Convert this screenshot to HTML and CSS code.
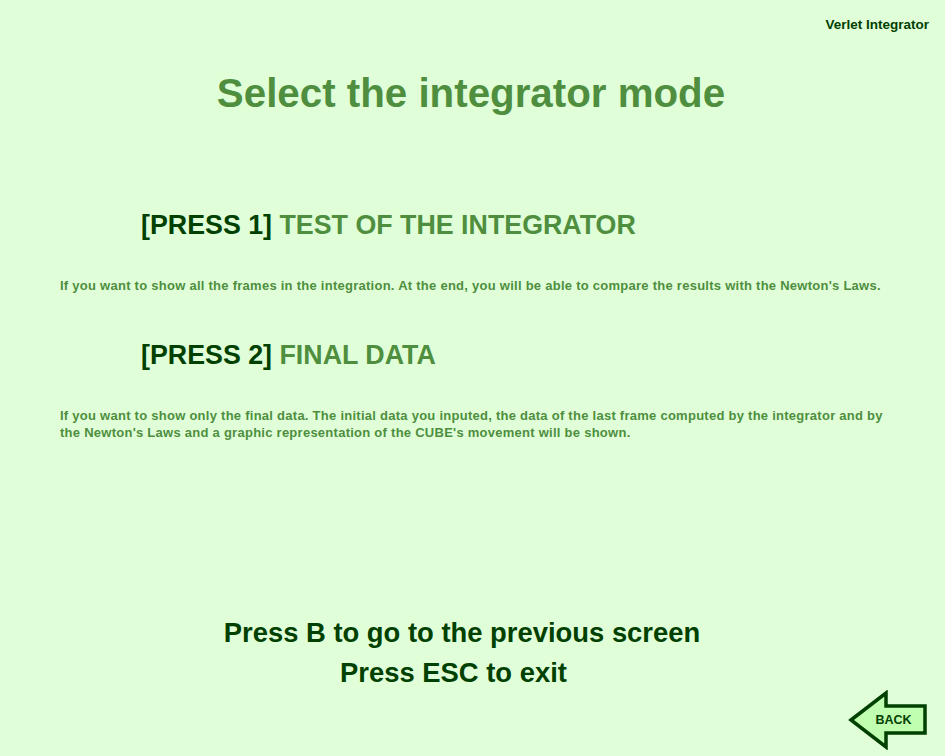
FILE: index.html
```html
<!DOCTYPE html>
<html>
<head>
<meta charset="utf-8">
<link rel="stylesheet" href="styles.css">
</head>
<body>
<div class="page">
  <header class="topbar">Verlet Integrator</header>
  <h1 class="title">Select the integrator mode</h1>
  <section class="option">
    <h2 class="opt-head"><span class="key">[PRESS 1]</span> TEST OF THE INTEGRATOR</h2>
    <p class="opt-desc">If you want to show all the frames in the integration. At the end, you will be able to compare the results with the Newton's Laws.</p>
  </section>
  <section class="option second">
    <h2 class="opt-head"><span class="key">[PRESS 2]</span> FINAL DATA</h2>
    <p class="opt-desc">If you want to show only the final data. The initial data you inputed, the data of the last frame computed by the integrator and by the Newton's Laws and a graphic representation of the CUBE's movement will be shown.</p>
  </section>
  <div class="hints">
    <div class="hint hint-b">Press B to go to the previous screen</div>
    <div class="hint hint-esc">Press ESC to exit</div>
  </div>
  <div class="back-row">
    <div class="back">
      <svg width="82" height="60" viewBox="0 0 82 60">
        <polygon points="3,30 38,3 38,16 77,16 77,43 38,43 38,57" fill="#c0ffb0" stroke="#004000" stroke-width="3.5" stroke-linejoin="miter"/>
        <text x="45.5" y="33.5" text-anchor="middle" class="back-text">BACK</text>
      </svg>
    </div>
  </div>
</div>
</body>
</html>
```
FILE: styles.css
```css
html, body {
  margin: 0;
  padding: 0;
}
body {
  background: #e0ffd8;
  font-family: "Liberation Sans", Arial, sans-serif;
  font-weight: bold;
}
.page {
  width: 945px;
  height: 756px;
  overflow: hidden;
  display: flex;
  flex-direction: column;
}
.topbar {
  padding: 18px 16px 0 0;
  text-align: right;
  font-size: 13.5px;
  line-height: 13px;
  color: #004000;
}
.title {
  margin: 43px 0 0 0;
  padding-right: 3px;
  text-align: center;
  font-size: 40.3px;
  line-height: 40px;
  color: #4e8e3e;
  font-weight: bold;
}
.option {
  padding: 0 0 0 60px;
}
.opt-head {
  margin: 98px 0 0 81px;
  font-size: 26.8px;
  line-height: 27px;
  font-weight: bold;
  color: #4e8e3e;
}
.second .opt-head {
  margin-top: 48px;
}
.key {
  color: #004000;
}
.opt-desc {
  margin: 38px 0 0 0;
  width: 832px;
  font-size: 13px;
  letter-spacing: 0.26px;
  line-height: 17px;
  color: #4e8e3e;
}
.hints {
  margin-top: 172px;
  text-align: center;
  font-size: 27.4px;
  line-height: 40px;
  color: #004000;
}
.hint-b {
  padding-right: 21px;
}
.hint-esc {
  padding-right: 38px;
}
.back-row {
  display: flex;
  justify-content: flex-end;
  margin-top: -3px;
  padding-right: 15px;
}
.back svg {
  display: block;
}
.back-text {
  font-family: "Liberation Sans", Arial, sans-serif;
  font-weight: bold;
  font-size: 12.5px;
  fill: #004000;
}
```
